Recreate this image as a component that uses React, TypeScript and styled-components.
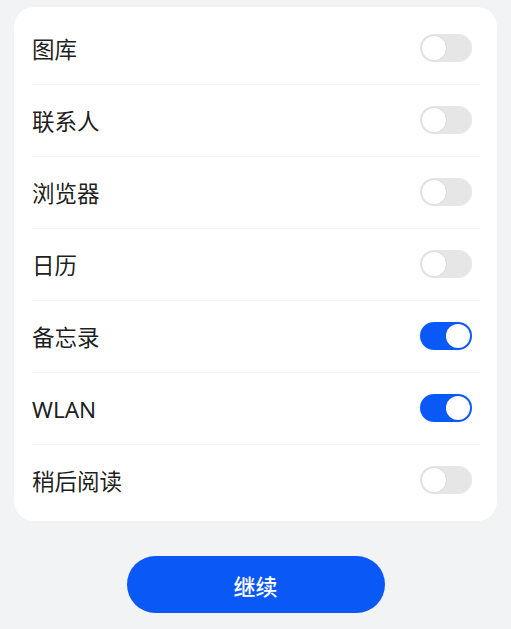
import styled, { createGlobalStyle } from 'styled-components'
import { FC, useState } from 'react'

const GlobalStyle = createGlobalStyle`
  html, body {
    margin: 0;
    padding: 0;
    background: #f1f3f5;
    font-family: "Noto Sans", "Noto Sans CJK SC", sans-serif;
  }
`

const initialItems = [
  { name: '图库', on: false },
  { name: '联系人', on: false },
  { name: '浏览器', on: false },
  { name: '日历', on: false },
  { name: '备忘录', on: true },
  { name: 'WLAN', on: true },
  { name: '稍后阅读', on: false },
]

const App: FC = () => {
  const [items, setItems] = useState(initialItems)

  const toggle = (index: number) => {
    setItems(items.map((item, i) => (i === index ? { ...item, on: !item.on } : item)))
  }

  return (
    <Page>
      <GlobalStyle />
      <Card>
        {items.map((item, index) => (
          <Row key={item.name} last={index === items.length - 1}>
            <Label>{item.name}</Label>
            <Switch on={item.on} onClick={() => toggle(index)}>
              <Thumb on={item.on} />
            </Switch>
          </Row>
        ))}
      </Card>
      <ContinueButton>继续</ContinueButton>
    </Page>
  )
}

const Page = styled.div`
  display: flex;
  flex-direction: column;
  align-items: center;
  padding: 7px 14px 0;
  gap: 35px;
`

const Card = styled.div`
  display: flex;
  flex-direction: column;
  width: 100%;
  box-sizing: border-box;
  background: #ffffff;
  border-radius: 20px;
  padding: 6px 17px 4px 18px;
`

const Row = styled.div<{ last: boolean }>`
  display: flex;
  flex-direction: row;
  align-items: center;
  justify-content: space-between;
  height: 72px;
  box-sizing: border-box;
  padding-right: 8px;
  border-bottom: ${({ last }) => (last ? 'none' : '1px solid #f3f3f3')};
`

const Label = styled.span`
  font-size: 22.5px;
  color: rgba(0, 0, 0, 0.9);
  line-height: 1;
  padding-top: 3px;
`

const Switch = styled.div<{ on: boolean }>`
  display: flex;
  align-items: center;
  width: 52px;
  height: 28px;
  box-sizing: border-box;
  padding: 2px;
  border-radius: 14px;
  background: ${({ on }) => (on ? '#0a59f7' : '#e6e6e6')};
  justify-content: ${({ on }) => (on ? 'flex-end' : 'flex-start')};
  cursor: pointer;
  margin-top: -2px;
`

const Thumb = styled.div<{ on: boolean }>`
  width: 24px;
  height: 24px;
  border-radius: 50%;
  background: #ffffff;
  box-shadow: ${({ on }) => (on ? 'none' : '0 0 0 1px #dcdcdc')};
`

const ContinueButton = styled.button`
  width: 258px;
  height: 57px;
  border: none;
  border-radius: 29px;
  background: #0a59f7;
  color: #ffffff;
  font-family: "Noto Sans", "Noto Sans CJK SC", sans-serif;
  font-size: 22px;
  font-weight: 500;
  cursor: pointer;
`

export default App
